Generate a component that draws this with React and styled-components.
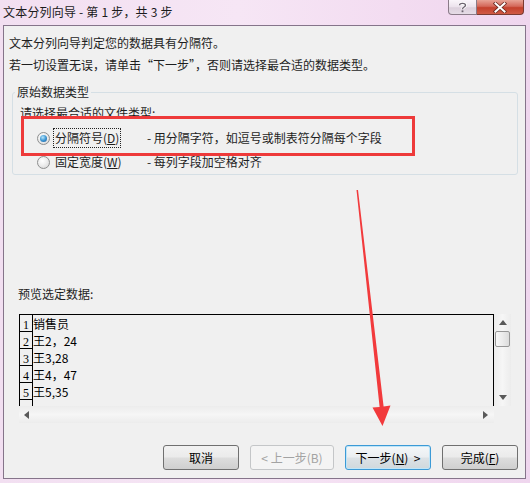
import React from "react";
import styled, { createGlobalStyle, css } from "styled-components";

const GlobalStyle = createGlobalStyle`
  html, body { margin: 0; padding: 0; background: #efdcef; }
  body { font-family: "Noto Sans CJK SC", sans-serif; }
  * { box-sizing: border-box; }
`;

const Window = styled.div`
  position: relative;
  width: 530px;
  height: 483px;
  overflow: hidden;
  display: flex;
  flex-direction: column;
  background: linear-gradient(90deg, #f2dff1 0%, #f6e6f5 45%, #f3dcf1 75%, #efd6ee 100%);
`;

const TitleBar = styled.div`
  height: 25px;
  display: flex;
  align-items: flex-start;
  padding: 0 6px 0 3px;
`;

const TitleText = styled.div`
  font-size: 12px;
  line-height: 24px;
  color: #1b1b1b;
  letter-spacing: 0.2px;
`;

const CaptionButtons = styled.div`
  margin-left: auto;
  display: flex;
`;

const CaptionButton = styled.div`
  height: 15px;
  display: flex;
  align-items: center;
  justify-content: center;
  border: 1px solid #8a7b88;
  border-top: none;
  ${(p) =>
    p.$close
      ? css`
          width: 47px;
          border-left: none;
          border-color: #7b3a31;
          border-radius: 0 0 4px 0;
          background: linear-gradient(180deg, #e8a396 0%, #d4685a 45%, #c4402d 55%, #cf5b45 100%);
        `
      : css`
          width: 29px;
          border-radius: 0 0 0 4px;
          background: linear-gradient(180deg, #faf5fa 0%, #ece2ec 50%, #dcd0dc 55%, #e6dce6 100%);
        `}
`;

const Client = styled.div`
  margin: 0 4px 4px 3px;
  border: 1px solid #85748a;
  background: #f0f0f0;
  padding: 6px 0 8px;
  display: flex;
  flex-direction: column;
  color: #1e1e1e;
  font-size: 12px;
`;

const Line = styled.div`
  padding-left: 5px;
  line-height: 22px;
  white-space: nowrap;
`;

const GroupBox = styled.fieldset`
  margin: 8px 7px 0 8px;
  padding: 3px 0 2px 7px;
  border: 1px solid #d5dfe5;
  border-radius: 3px;
  min-width: 0;
`;

const Legend = styled.legend`
  margin-left: -5px;
  padding: 0 2px;
  line-height: 16px;
  font-size: 12px;
`;

const Prompt = styled.div`
  line-height: 20px;
`;

const RadioRow = styled.div`
  display: grid;
  grid-template-columns: 13px 91px auto;
  column-gap: 3px;
  align-items: center;
  height: 20px;
  margin: ${(p) => (p.$first ? "5px" : "4px")} 0 0 17px;
`;

const Radio = styled.span`
  position: relative;
  width: 13px;
  height: 13px;
  border-radius: 50%;
  border: 1px solid #8e8f8f;
  background: radial-gradient(circle at 40% 35%, #ffffff 0%, #eeeeee 45%, #d2d2d2 100%);
  ${(p) =>
    p.$checked &&
    css`
      &::after {
        content: "";
        position: absolute;
        left: 2px;
        top: 2px;
        width: 7px;
        height: 7px;
        border-radius: 50%;
        background: radial-gradient(circle at 40% 35%, #b8e6fb 0%, #3f97d3 50%, #17589a 100%);
      }
    `}
`;

const RadioLabel = styled.span`
  justify-self: start;
  padding: 0 1px;
  line-height: 18px;
  border: 1px dotted ${(p) => (p.$focused ? "#222" : "transparent")};
  white-space: nowrap;
`;

const Desc = styled.span`
  white-space: nowrap;
  line-height: 18px;
`;

const Key = styled.span`
  text-decoration: underline;
`;

const PreviewLabel = styled.div`
  margin: 109px 0 0 14px;
  line-height: 20px;
`;

const Preview = styled.div`
  margin: 10px 14px 0 15px;
  display: grid;
  grid-template-columns: 1fr 17px;
  grid-template-rows: 92px 17px;
`;

const DataArea = styled.div`
  border-top: 1px solid #000;
  border-left: 1px solid #000;
  border-right: 1px solid #000;
  overflow: hidden;
  background: #f0f0f0;
`;

const DataRow = styled.div`
  display: flex;
  height: 17px;
`;

const NumCell = styled.div`
  width: 13px;
  flex: none;
  border-right: 1px solid #000;
  border-bottom: 1px solid #000;
  display: flex;
  align-items: flex-end;
  justify-content: center;
  font-family: "Liberation Serif", serif;
  font-size: 12px;
  line-height: 12px;
  color: #000;
`;

const DataCell = styled.div`
  font-size: 12px;
  line-height: 17px;
  color: #000;
  white-space: pre;
`;

const VScroll = styled.div`
  display: flex;
  flex-direction: column;
  align-items: center;
  background: linear-gradient(90deg, #ececec, #f6f6f6 50%, #ececec);
`;

const HScroll = styled.div`
  display: flex;
  align-items: center;
  justify-content: space-between;
  padding: 0 6px 0 5px;
  background: linear-gradient(180deg, #ececec, #f6f6f6 50%, #ececec);
`;

const Corner = styled.div`
  background: #f0f0f0;
`;

const ArrowBox = styled.div`
  width: 17px;
  height: 17px;
  display: flex;
  align-items: center;
  justify-content: center;
`;

const Thumb = styled.div`
  width: 15px;
  height: 16px;
  border: 1px solid #979797;
  border-radius: 2px;
  background: linear-gradient(90deg, #f8f8f8 0%, #ececec 50%, #dcdcdc 100%);
`;

const Spacer = styled.div`
  flex: 1;
`;

const ButtonRow = styled.div`
  display: flex;
  justify-content: flex-end;
  gap: 11px;
  margin-top: 22px;
  padding-right: 7px;
`;

const Button = styled.div`
  width: ${(p) => p.$w}px;
  height: 25px;
  display: flex;
  align-items: center;
  justify-content: center;
  border: 1px solid #707070;
  border-radius: 3px;
  background: linear-gradient(180deg, #f2f2f2 0%, #ebebeb 48%, #dddddd 52%, #cfcfcf 100%);
  font-size: 12px;
  color: #000;
  white-space: pre;
  ${(p) =>
    p.$disabled &&
    css`
      border-color: #c4c6c8;
      background: #f4f4f4;
      color: #a3a3a3;
    `}
  ${(p) =>
    p.$default &&
    css`
      border-color: #3c9ad6;
      box-shadow: inset 0 0 0 1px #bfe5f8;
      background: linear-gradient(180deg, #f4f7f9 0%, #eaeef1 48%, #dce2e6 52%, #d0d8dc 100%);
    `}
`;

const RedBox = styled.div`
  position: absolute;
  left: 21px;
  top: 116px;
  width: 394px;
  height: 40px;
  border: 3px solid #ee3a3a;
  pointer-events: none;
`;

const ArrowOverlay = styled.svg`
  position: absolute;
  left: 0;
  top: 0;
  pointer-events: none;
`;

const Tri = ({ dir }) => {
  const pts = {
    up: "0,5 4,0 8,5",
    down: "0,0 8,0 4,5",
    left: "5,0 5,8 0,4",
    right: "0,0 0,8 5,4",
  }[dir];
  const vertical = dir === "up" || dir === "down";
  return (
    <svg width={vertical ? 8 : 5} height={vertical ? 5 : 8} viewBox={vertical ? "0 0 8 5" : "0 0 5 8"}>
      <polygon points={pts} fill="#5a5a5a" />
    </svg>
  );
};

const rows = [
  ["1", "销售员"],
  ["2", "王2，24"],
  ["3", "王3,28"],
  ["4", "王4，47"],
  ["5", "王5,35"],
  ["", ""],
];

export default function App() {
  return (
    <>
      <GlobalStyle />
      <Window>
        <TitleBar>
          <TitleText>文本分列向导 - 第 1 步，共 3 步</TitleText>
          <CaptionButtons>
            <CaptionButton>
              <svg width="9" height="11" viewBox="0 0 9 11">
                <path d="M1.5 3.2 C1.5 0.8 7.5 0.8 7.5 3.2 C7.5 5 4.5 5 4.5 7.2" fill="none" stroke="#fff" strokeWidth="3" />
                <path d="M1.5 3.2 C1.5 0.8 7.5 0.8 7.5 3.2 C7.5 5 4.5 5 4.5 7.2" fill="none" stroke="#6d6470" strokeWidth="1.4" />
                <rect x="3.6" y="8.4" width="1.8" height="1.8" fill="#6d6470" />
              </svg>
            </CaptionButton>
            <CaptionButton $close>
              <svg width="14" height="11" viewBox="0 0 14 11">
                <path d="M2.5 1.5 L11.5 9.5 M11.5 1.5 L2.5 9.5" stroke="#6a2a22" strokeWidth="3.6" strokeLinecap="square" />
                <path d="M2.5 1.5 L11.5 9.5 M11.5 1.5 L2.5 9.5" stroke="#ffffff" strokeWidth="2" strokeLinecap="square" />
              </svg>
            </CaptionButton>
          </CaptionButtons>
        </TitleBar>

        <Client>
          <Line>文本分列向导判定您的数据具有分隔符。</Line>
          <Line>若一切设置无误，请单击“下一步”，否则请选择最合适的数据类型。</Line>

          <GroupBox>
            <Legend>原始数据类型</Legend>
            <Prompt>请选择最合适的文件类型:</Prompt>
            <RadioRow $first>
              <Radio $checked />
              <RadioLabel $focused>
                分隔符号(<Key>D</Key>)
              </RadioLabel>
              <Desc>- 用分隔字符，如逗号或制表符分隔每个字段</Desc>
            </RadioRow>
            <RadioRow>
              <Radio />
              <RadioLabel>
                固定宽度(<Key>W</Key>)
              </RadioLabel>
              <Desc>- 每列字段加空格对齐</Desc>
            </RadioRow>
          </GroupBox>

          <PreviewLabel>预览选定数据:</PreviewLabel>
          <Preview>
            <DataArea>
              {rows.map(([n, t], i) => (
                <DataRow key={i}>
                  <NumCell>{n}</NumCell>
                  <DataCell>{t}</DataCell>
                </DataRow>
              ))}
            </DataArea>
            <VScroll>
              <ArrowBox>
                <Tri dir="up" />
              </ArrowBox>
              <Thumb />
              <Spacer />
              <ArrowBox>
                <Tri dir="down" />
              </ArrowBox>
            </VScroll>
            <HScroll>
              <Tri dir="left" />
              <Tri dir="right" />
            </HScroll>
            <Corner />
          </Preview>

          <ButtonRow>
            <Button $w={76}>取消</Button>
            <Button $w={84} $disabled>
              {"< 上一步(B)"}
            </Button>
            <Button $w={86} $default>
              下一步(<Key>N</Key>){"  >"}
            </Button>
            <Button $w={76}>
              完成(<Key>F</Key>)
            </Button>
          </ButtonRow>
        </Client>

        <RedBox />
        <ArrowOverlay width="530" height="483" viewBox="0 0 530 483">
          <polygon
            points="356.5,190 358,190 383.6,406.5 390.5,405.5 382.5,426 372.5,407.5 379.6,407"
            fill="#f23a3c"
          />
        </ArrowOverlay>
      </Window>
    </>
  );
}
